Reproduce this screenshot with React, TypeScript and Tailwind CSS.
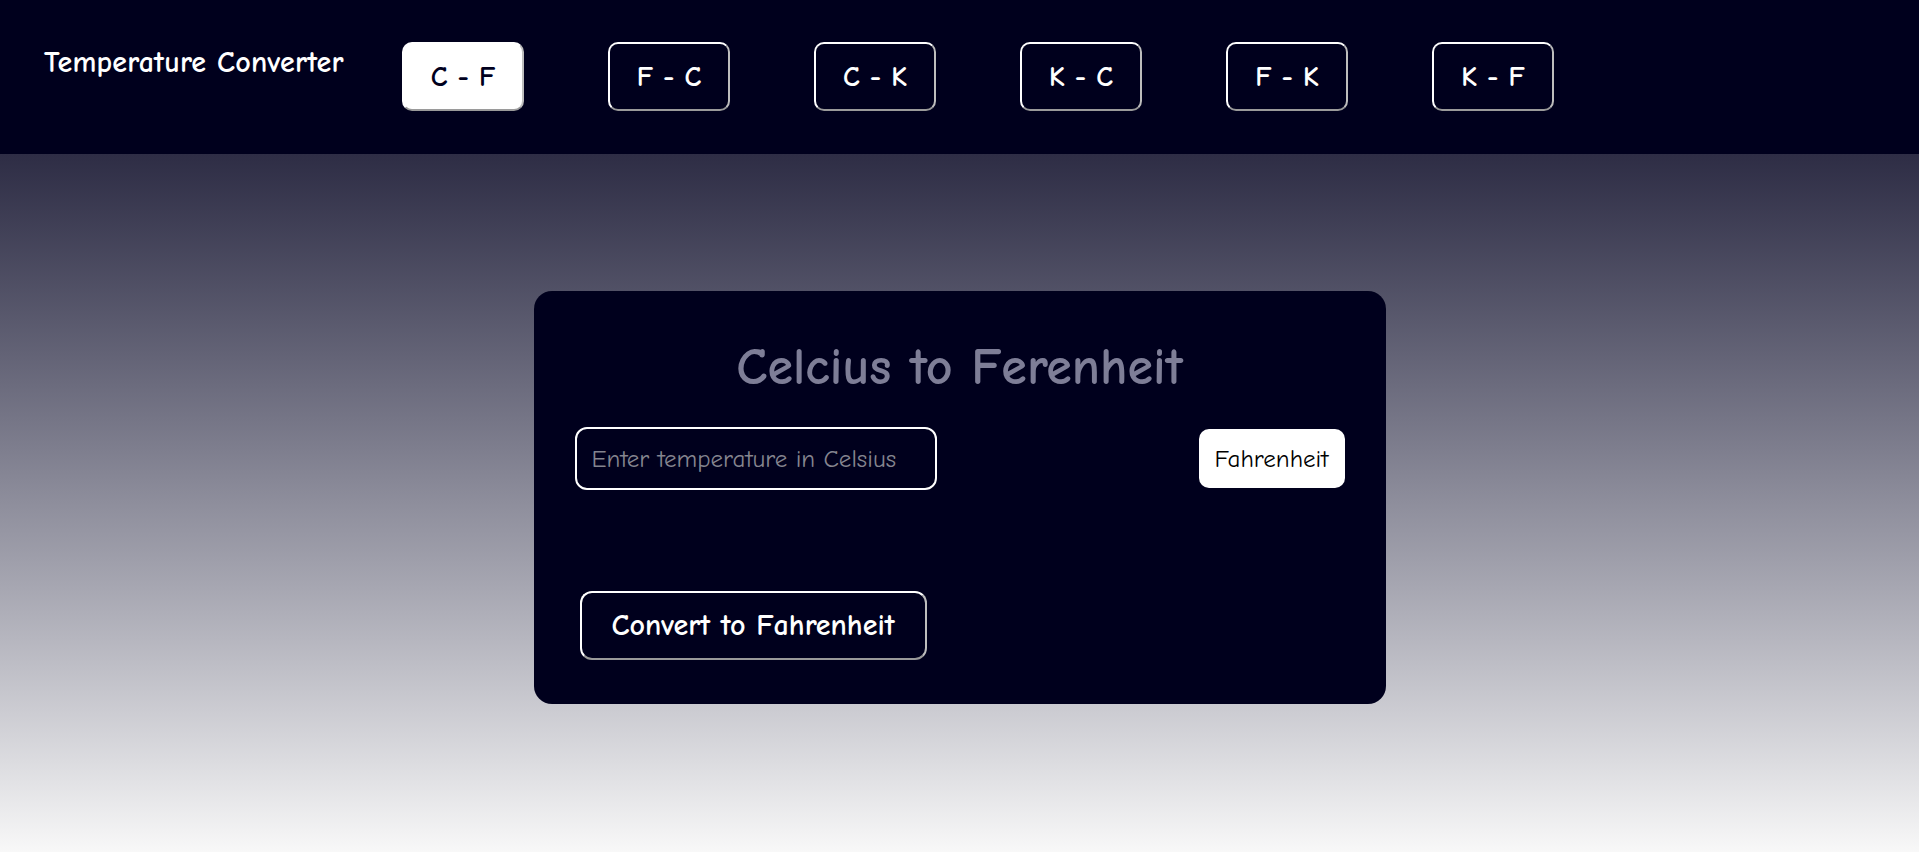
import React, { useState } from 'react';

const font = { fontFamily: '"Comic Sans MS", "Comic Neue", "Open Sans", sans-serif' };

const modes = ['C - F', 'F - C', 'C - K', 'K - C', 'F - K', 'K - F'];

const App: React.FC = () => {
  const [active, setActive] = useState('C - F');
  const [value, setValue] = useState('');

  return (
    <div className="min-h-[852px] w-full flex flex-col" style={font}>
      <header className="h-[154px] bg-[#00001d] flex items-start pl-[44px]">
        <h1 className="mt-[43px] w-[358px] text-white text-[30px] font-bold leading-[40px] tracking-[0.2px]">
          Temperature Converter
        </h1>
        <nav className="mt-[42px] flex gap-[84px]">
          {modes.map((m) => (
            <button
              key={m}
              onClick={() => setActive(m)}
              className={`w-[122px] h-[69px] rounded-[10px] border-2 border-t-white border-l-white border-r-[#bdbdbd] border-b-[#9a9a9a] text-[28px] font-bold ${
                active === m ? 'bg-white text-[#00001d]' : 'bg-transparent text-white'
              }`}
            >
              {m}
            </button>
          ))}
        </nav>
      </header>

      <main className="flex-1 h-[698px] bg-gradient-to-b from-[#2e2d45] via-[#8e8e9c] to-[#f8f8f8] flex justify-center pt-[137px]">
        <section className="w-[852px] h-[413px] bg-[#00001d] rounded-[18px] px-[41px] pt-[43px] flex flex-col">
          <h2 className="text-center text-[#7e7e97] text-[52px] font-bold leading-[66px]">
            Celcius to Ferenheit
          </h2>
          <div className="mt-[27px] flex items-center justify-between">
            <input
              type="text"
              value={value}
              onChange={(e) => setValue(e.target.value)}
              placeholder="Enter temperature in Celsius"
              className="w-[362px] h-[63px] rounded-[12px] border-2 border-white bg-transparent pl-[15px] text-[25px] text-white placeholder:text-[#85858f] outline-none"
              style={font}
            />
            <button className="w-[146px] h-[59px] rounded-[10px] bg-white text-black text-[25px]">
              Fahrenheit
            </button>
          </div>
          <div className="mt-[101px]">
            <button className="ml-[5px] w-[347px] h-[69px] rounded-[12px] border-2 border-t-white border-l-white border-r-[#bdbdbd] border-b-[#9a9a9a] text-white text-[30px] font-bold">
              Convert to Fahrenheit
            </button>
          </div>
        </section>
      </main>
    </div>
  );
};

export default App;
